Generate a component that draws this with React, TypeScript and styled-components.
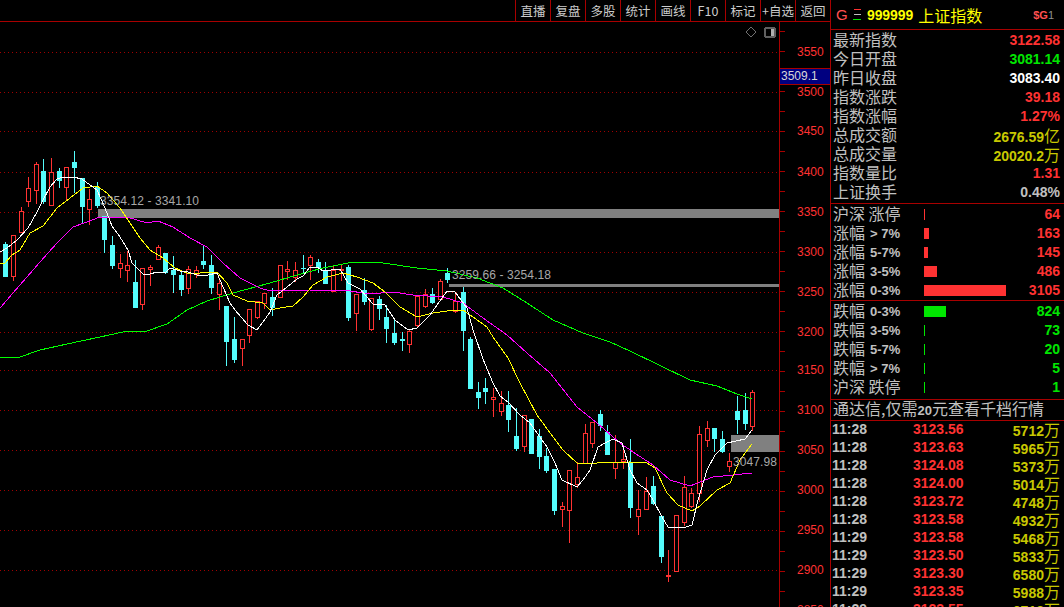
import React from 'react'
import styled, { createGlobalStyle } from 'styled-components'

const RED = '#ff3232'
const CYAN = '#54fcfc'
const GREEN = '#00e600'
const YELLOW = '#c8c800'
const GREY = '#c0c0c0'
const LINE = '#a80000'

type Candle = [number, number, number, number, 'r' | 'c']

// top, bottom, high, low in page pixels
const candles: Candle[] = [
  [244, 277, 242, 277, 'c'], [235, 276, 235, 281, 'r'], [211, 232, 207, 232, 'r'], [188, 201, 177, 207, 'r'],
  [164, 190, 162, 204, 'r'], [171, 202, 159, 204, 'c'], [172, 205, 158, 205, 'r'], [171, 181, 168, 188, 'c'],
  [167, 187, 167, 200, 'r'], [162, 168, 151, 193, 'c'], [178, 207, 178, 224, 'c'], [199, 209, 189, 225, 'r'],
  [187, 206, 182, 208, 'c'], [216, 240, 216, 253, 'c'], [245, 266, 236, 269, 'c'], [263, 268, 254, 278, 'r'],
  [265, 270, 251, 282, 'r'], [282, 308, 260, 308, 'c'], [268, 304, 268, 310, 'r'], [267, 269, 265, 286, 'r'],
  [247, 259, 245, 260, 'r'], [253, 273, 253, 274, 'c'], [270, 275, 256, 293, 'c'], [275, 290, 271, 296, 'c'],
  [269, 288, 266, 294, 'r'], [270, 274, 266, 278, 'r'], [261, 265, 245, 269, 'c'], [265, 288, 255, 294, 'c'],
  [283, 294, 280, 310, 'r'], [306, 342, 306, 366, 'c'], [339, 360, 317, 363, 'c'], [339, 348, 339, 366, 'r'],
  [309, 335, 309, 343, 'r'], [301, 317, 301, 319, 'r'], [293, 303, 293, 309, 'r'], [297, 308, 288, 316, 'c'],
  [265, 297, 265, 297, 'r'], [269, 271, 261, 280, 'r'], [270, 277, 262, 282, 'r'], [268, 269, 255, 273, 'c'],
  [257, 265, 255, 280, 'r'], [262, 268, 259, 273, 'c'], [271, 284, 262, 284, 'c'], [270, 291, 265, 292, 'r'],
  [269, 270, 265, 281, 'r'], [267, 318, 265, 321, 'c'], [294, 313, 294, 331, 'r'], [290, 302, 278, 305, 'c'],
  [298, 329, 298, 331, 'r'], [299, 309, 296, 320, 'c'], [317, 329, 305, 343, 'c'], [333, 343, 319, 345, 'c'],
  [339, 341, 332, 351, 'c'], [331, 344, 329, 353, 'r'], [296, 325, 296, 328, 'r'], [294, 306, 289, 308, 'r'],
  [294, 303, 288, 304, 'c'], [281, 299, 279, 300, 'r'], [273, 280, 268, 283, 'c'], [301, 311, 292, 313, 'r'],
  [292, 331, 287, 351, 'c'], [339, 389, 337, 389, 'c'], [392, 398, 382, 409, 'c'], [388, 392, 378, 404, 'c'],
  [397, 399, 388, 417, 'r'], [403, 411, 391, 416, 'r'], [405, 420, 391, 432, 'c'], [436, 449, 408, 451, 'c'],
  [415, 446, 415, 452, 'r'], [419, 454, 419, 454, 'c'], [436, 457, 429, 469, 'c'], [456, 471, 448, 473, 'c'],
  [469, 511, 469, 515, 'c'], [506, 509, 502, 527, 'r'], [470, 510, 470, 543, 'r'], [477, 484, 462, 488, 'r'],
  [433, 463, 424, 464, 'r'], [422, 443, 422, 448, 'r'], [414, 426, 410, 431, 'c'], [432, 455, 425, 455, 'c'],
  [462, 468, 435, 479, 'r'], [459, 461, 447, 469, 'r'], [462, 508, 439, 518, 'c'], [509, 516, 490, 535, 'r'],
  [491, 509, 477, 509, 'r'], [486, 504, 476, 505, 'c'], [516, 557, 516, 563, 'c'], [575, 576, 550, 582, 'r'],
  [515, 571, 515, 572, 'r'], [487, 522, 476, 526, 'r'], [493, 506, 488, 508, 'r'], [434, 493, 426, 502, 'r'],
  [428, 440, 421, 447, 'r'], [428, 439, 428, 452, 'c'], [439, 452, 431, 453, 'c'], [461, 466, 453, 472, 'r'],
  [411, 420, 396, 434, 'c'], [410, 424, 393, 430, 'c'], [392, 426, 390, 431, 'r'],
]

const ma5 = '0,252 7,248 17,240 28,228 37,212 43,200 50,187 57,179 63,177 73,177 82,179 90,185 97,190 105,208 112,226 120,237 128,250 132,263 137,268 143,274 150,274 157,272 165,273 170,268 180,271 188,272 197,275 208,275 217,273 223,287 230,303 235,310 248,325 257,330 263,322 270,312 277,295 287,287 297,279 303,276 310,267 317,267 323,271 340,269 348,283 360,289 373,304 385,305 395,320 408,330 417,328 430,315 447,291 455,292 467,308 473,330 483,359 493,383 500,396 508,402 520,415 530,423 547,447 555,463 562,480 577,487 583,480 590,470 598,447 607,442 613,439 622,443 630,470 637,483 647,490 653,500 662,517 668,527 683,528 692,525 698,500 707,470 715,455 727,443 745,439 752,430'
const ma10 = '0,263 5,263 12,255 20,250 30,233 43,226 57,208 70,198 83,188 97,186 107,193 120,208 130,223 140,238 150,250 163,258 175,268 187,273 200,273 217,272 227,283 233,295 247,301 263,303 270,310 280,308 293,306 303,297 313,285 327,277 343,273 357,277 373,283 385,292 400,307 417,317 433,313 447,311 463,310 473,317 487,327 493,337 508,358 520,383 537,415 553,437 563,450 577,463 583,464 597,463 630,462 647,463 655,468 667,493 678,505 692,511 700,506 717,490 730,483 740,460 752,444'
const ma20 = '0,308 13,293 27,277 40,262 57,243 73,227 87,222 100,217 127,217 147,223 158,221 173,227 190,238 207,247 223,263 240,278 260,288 270,291 310,290 343,290 370,294 393,292 413,295 443,297 463,303 483,318 507,335 527,353 550,373 577,407 597,423 620,443 633,452 653,465 670,480 690,486 713,477 733,475 752,473'
const ma60 = '0,358 20,357 40,350 67,344 100,337 123,332 147,331 167,324 187,310 207,301 233,293 270,283 297,275 323,268 353,262 383,263 417,268 447,271 477,278 503,288 527,303 553,320 583,333 610,342 630,351 690,380 717,386 737,394 752,399'

const levels: [number, number][] = [
  [3550, 52], [3500, 92], [3450, 131], [3400, 172], [3350, 212], [3300, 252], [3250, 292], [3200, 332],
  [3150, 370], [3100, 410], [3050, 450], [3000, 490], [2950, 530], [2900, 570], [2850, 610],
]

const tools = ['直播', '复盘', '多股', '统计', '画线', 'F10', '标记', '+自选', '返回']

const quotes: [string, string, string][] = [
  ['最新指数', '3122.58', RED], ['今日开盘', '3081.14', GREEN], ['昨日收盘', '3083.40', '#ffffff'],
  ['指数涨跌', '39.18', RED], ['指数涨幅', '1.27%', RED], ['总成交额', '2676.59亿', YELLOW],
  ['总成交量', '20020.2万', YELLOW], ['指数量比', '1.31', RED], ['上证换手', '0.48%', GREY],
]

const ups: [string, string, number, string][] = [
  ['沪深', '涨停', 1, '64'], ['涨幅', '> 7%', 5, '163'], ['涨幅', '5-7%', 4, '145'], ['涨幅', '3-5%', 13, '486'], ['涨幅', '0-3%', 82, '3105'],
]
const downs: [string, string, number, string][] = [
  ['跌幅', '0-3%', 22, '824'], ['跌幅', '3-5%', 1, '73'], ['跌幅', '5-7%', 1, '20'], ['跌幅', '> 7%', 1, '5'], ['沪深', '跌停', 1, '1'],
]

const ticks: [string, string, string][] = [
  ['11:28', '3123.56', '5712'], ['11:28', '3123.63', '5965'], ['11:28', '3124.08', '5373'], ['11:28', '3124.00', '5014'],
  ['11:28', '3123.72', '4748'], ['11:28', '3123.58', '4932'], ['11:29', '3123.58', '5468'], ['11:29', '3123.50', '5833'],
  ['11:29', '3123.30', '6580'], ['11:29', '3123.35', '5988'], ['11:29', '3123.55', '6712'],
]

const GlobalStyle = createGlobalStyle`
  html, body { margin: 0; padding: 0; background: #000; overflow: hidden; }
`

const Page = styled.div`
  display: flex;
  width: 1064px;
  height: 607px;
  overflow: hidden;
  background: #000;
  font-family: "Noto Sans CJK SC", "Liberation Sans", sans-serif;
`

const Main = styled.div`
  display: flex;
  flex-direction: column;
  width: 830px;
  flex: none;
`

const Toolbar = styled.div`
  display: flex;
  justify-content: flex-end;
  height: 21px;
  flex: none;
  border-bottom: 1px solid ${LINE};
`

const ToolButton = styled.div`
  box-sizing: border-box;
  width: 35px;
  border-left: 1px solid ${LINE};
  color: #cccccc;
  font-size: 12.5px;
  line-height: 21px;
  text-align: center;
  white-space: nowrap;
`

const ChartSvg = styled.svg`
  display: block;
  flex: none;
  shape-rendering: crispEdges;
`

const AxisText = styled.text`
  fill: ${RED};
  font: 12px "Liberation Sans", sans-serif;
  dominant-baseline: central;
`

const RangeText = styled.text`
  fill: #a8a8a8;
  font: 12px "Liberation Sans", sans-serif;
  letter-spacing: 0.1px;
`

const LastText = styled.text`
  fill: #d8d8d8;
  font: 12px "Liberation Sans", sans-serif;
  dominant-baseline: central;
`

const Side = styled.div`
  flex: 1;
  display: flex;
  flex-direction: column;
  border-left: 1px solid ${LINE};
  min-width: 0;
`

const Header = styled.div`
  display: flex;
  align-items: center;
  height: 29px;
  flex: none;
  padding: 0 10px 0 5px;
  border-bottom: 1px solid ${LINE};
`

const Market = styled.span`
  color: #ff5050;
  font: 15px "Liberation Sans", sans-serif;
  width: 17px;
`

const BarsIcon = styled.svg`
  flex: none;
  margin-right: 6px;
  shape-rendering: crispEdges;
`

const Code = styled.span`
  color: #ffff00;
  font: bold 14px "Liberation Sans", sans-serif;
  letter-spacing: -0.1px;
  margin-right: 5px;
`

const Name = styled.span`
  color: #ffff00;
  font-size: 16px;
`

const Tag = styled.span`
  margin-left: auto;
  color: #ff5050;
  font: bold 11px "Liberation Sans", sans-serif;
  span { color: #909090; font-weight: normal; }
`

const Section = styled.div<{ $height: number }>`
  height: ${p => p.$height}px;
  flex: none;
  padding: 0 4px 0 2px;
  border-bottom: 1px solid ${LINE};
  overflow: hidden;
`

const QuoteRow = styled.div`
  display: flex;
  justify-content: space-between;
  height: 19px;
  line-height: 18px;
  color: ${GREY};
  font-size: 16px;
`

const Num = styled.span<{ $color: string }>`
  color: ${p => p.$color};
  font: bold 14px/20px "Liberation Sans", "Noto Sans CJK SC", sans-serif;
  white-space: nowrap;
`

const RangeRow = styled.div`
  display: grid;
  grid-template-columns: 91px 1fr auto;
  align-items: center;
  height: 19px;
`

const RangeLabel = styled.span`
  display: flex;
  align-items: center;
  margin-bottom: 2px;
  color: ${GREY};
  font-size: 16px;
  line-height: 17px;
  b {
    margin: 2px 0 0 5px;
    font: bold 13px "Liberation Sans", sans-serif;
  }
`

const Bar = styled.i<{ $width: number; $color: string }>`
  display: block;
  width: ${p => p.$width}px;
  height: 11px;
  background: ${p => p.$color};
`

const Notice = styled.div`
  height: 20px;
  flex: none;
  padding-left: 2px;
  border-bottom: 1px solid ${LINE};
  color: ${GREY};
  font-size: 16px;
  line-height: 16px;
  white-space: nowrap;
  b { font: bold 13px "Liberation Sans", sans-serif; }
`

const TickList = styled.div`
  flex: 1;
  overflow: hidden;
  padding: 0 4px 0 1px;
`

const TickRows = styled.div`
  margin-top: -2px;
`

const TickRow = styled.div`
  display: grid;
  grid-template-columns: 81px 1fr auto;
  height: 18px;
  line-height: 18px;
`

const Wan = styled.span`
  font-family: "Noto Sans CJK SC", sans-serif;
  font-weight: 400;
  font-size: 16px;
`

const Unit = ({ value, color }: { value: string; color: string }) => {
  const last = value[value.length - 1]
  if (last === '万' || last === '亿') {
    return <Num $color={color}>{value.slice(0, -1)}<Wan>{last}</Wan></Num>
  }
  return <Num $color={color}>{value}</Num>
}

const Chart = () => {
  const minor: number[] = []
  for (let y = 31; y < 607; y += 20) minor.push(y)
  return (
    <ChartSvg width={830} height={585} viewBox="0 22 830 585">
      {levels.map(([, y]) => (
        <line key={y} x1={0} x2={779} y1={y + 0.5} y2={y + 0.5} stroke="#a00000" strokeDasharray="0.5 3.5" strokeDashoffset={-0.25} />
      ))}
      <rect x={98} y={209} width={681} height={9} fill="#808080" />
      <rect x={449} y={284} width={330} height={3} fill="#808080" />
      <rect x={731} y={435} width={48} height={17} fill="#808080" />

      {candles.map(([top, bottom, high, low, kind], i) => {
        const cx = Math.round(5.3 + 7.622 * i)
        const color = kind === 'r' ? RED : CYAN
        return (
          <g key={i}>
            <line x1={cx + 0.5} x2={cx + 0.5} y1={high} y2={low} stroke={color} />
            {kind === 'c'
              ? <rect x={cx - 2} y={top} width={5} height={bottom - top} fill={color} />
              : <rect x={cx - 1.5} y={top + 0.5} width={4} height={bottom - top} fill="#000" stroke={color} />}
          </g>
        )
      })}

      <polyline points={ma60} fill="none" stroke="#00ff00" />
      <polyline points={ma20} fill="none" stroke="#ff00ff" />
      <polyline points={ma10} fill="none" stroke="#ffff00" />
      <polyline points={ma5} fill="none" stroke="#ffffff" />

      <RangeText x={100} y={205}>3354.12 - 3341.10</RangeText>
      <RangeText x={452} y={279}>3259.66 - 3254.18</RangeText>
      <RangeText x={733} y={466}>3047.98</RangeText>

      <polygon points="751,27 756,32 751,37 746,32" fill="none" stroke="#707070" />
      <rect x={765} y={28} width={10} height={9} rx={2} fill="#000" stroke="#606060" strokeWidth={2} />
      <rect x={771} y={29} width={3} height={7} fill="#b0b0b0" />

      <line x1={779.5} x2={779.5} y1={22} y2={607} stroke={LINE} />
      {minor.map(y => <line key={y} x1={780} x2={785} y1={y + 0.5} y2={y + 0.5} stroke={LINE} />)}
      {levels.map(([price, y]) => <AxisText key={price} x={797} y={y}>{price}</AxisText>)}

      <rect x={780} y={69} width={50} height={15} fill="#000080" />
      <line x1={780} x2={830} y1={68.5} y2={68.5} stroke={LINE} />
      <line x1={780} x2={830} y1={84.5} y2={84.5} stroke={LINE} />
      <LastText x={781} y={75.5}>3509.1</LastText>
    </ChartSvg>
  )
}

const Range = ({ rows, color }: { rows: [string, string, number, string][]; color: string }) => (
  <>
    {rows.map(([a, b, width, count]) => (
      <RangeRow key={a + b}>
        {b.includes('停')
          ? <RangeLabel>{a} {b}</RangeLabel>
          : <RangeLabel>{a}<b>{b}</b></RangeLabel>}
        <Bar $width={width} $color={color} />
        <Num $color={color}>{count}</Num>
      </RangeRow>
    ))}
  </>
)

export default function App() {
  return (
    <Page>
      <GlobalStyle />
      <Main>
        <Toolbar>
          {tools.map(t => <ToolButton key={t}>{t}</ToolButton>)}
        </Toolbar>
        <Chart />
      </Main>
      <Side>
        <Header>
          <Market>G</Market>
          <BarsIcon width={8} height={11} viewBox="0 0 8 11">
            <rect x={1} y={0} width={7} height={1} fill="#ff3232" />
            <rect x={1} y={5} width={7} height={1} fill="#c0c0c0" />
            <rect x={0} y={10} width={8} height={1} fill="#00e600" />
          </BarsIcon>
          <Code>999999</Code>
          <Name>上证指数</Name>
          <Tag>$G<span>1</span></Tag>
        </Header>
        <Section $height={173}>
          {quotes.map(([label, value, color]) => (
            <QuoteRow key={label}>
              {label}
              <Unit value={value} color={color} />
            </QuoteRow>
          ))}
        </Section>
        <Section $height={96}>
          <Range rows={ups} color={RED} />
        </Section>
        <Section $height={98}>
          <Range rows={downs} color={GREEN} />
        </Section>
        <Notice>通达信,仅需<b>20</b>元查看千档行情</Notice>
        <TickList>
          <TickRows>
            {ticks.map(([time, price, volume], i) => (
              <TickRow key={i}>
                <Num $color={GREY}>{time}</Num>
                <Num $color={RED}>{price}</Num>
                <Unit value={volume + '万'} color={YELLOW} />
              </TickRow>
            ))}
          </TickRows>
        </TickList>
      </Side>
    </Page>
  )
}
